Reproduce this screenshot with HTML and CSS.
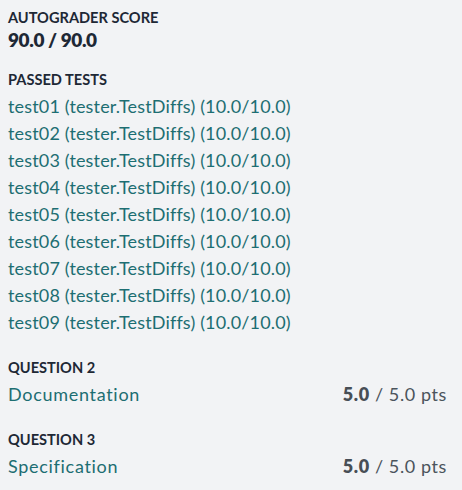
FILE: index.html
```html
<!DOCTYPE html>
<html>
<head>
<meta charset="utf-8">
<link rel="stylesheet" href="styles.css">
</head>
<body>
<div class="page">
  <section class="block summary">
    <div class="label">AUTOGRADER SCORE</div>
    <div class="score">90.0 / 90.0</div>
  </section>
  <section class="block">
    <div class="label">PASSED TESTS</div>
    <ul class="tests">
      <li>test01 (tester.TestDiffs) (10.0/10.0)</li>
      <li>test02 (tester.TestDiffs) (10.0/10.0)</li>
      <li>test03 (tester.TestDiffs) (10.0/10.0)</li>
      <li>test04 (tester.TestDiffs) (10.0/10.0)</li>
      <li>test05 (tester.TestDiffs) (10.0/10.0)</li>
      <li>test06 (tester.TestDiffs) (10.0/10.0)</li>
      <li>test07 (tester.TestDiffs) (10.0/10.0)</li>
      <li>test08 (tester.TestDiffs) (10.0/10.0)</li>
      <li>test09 (tester.TestDiffs) (10.0/10.0)</li>
    </ul>
  </section>
  <section class="block">
    <div class="label">QUESTION 2</div>
    <div class="question"><span class="qname">Documentation</span><span class="pts"><b>5.0</b> / 5.0 pts</span></div>
  </section>
  <section class="block">
    <div class="label">QUESTION 3</div>
    <div class="question"><span class="qname">Specification</span><span class="pts"><b>5.0</b> / 5.0 pts</span></div>
  </section>
</div>
</body>
</html>
```
FILE: styles.css
```css
html, body {
  margin: 0;
  padding: 0;
  background: #f2f3f5;
}
.page {
  padding: 8px 15px 0 8px;
  font-family: Lato, "Liberation Sans", sans-serif;
  color: #1e2835;
}
.block {
  margin-bottom: 22px;
}
.block.summary {
  margin-bottom: 18px;
}
.label {
  font-size: 14.6px;
  font-weight: 700;
  line-height: 20px;
  color: #1e2835;
}
.score {
  font-size: 19px;
  font-weight: 800;
  line-height: 24px;
  letter-spacing: -0.4px;
  color: #1e2835;
}
.tests {
  list-style: none;
  margin: 3px 0 0;
  padding: 0;
}
.tests li {
  font-size: 18px;
  line-height: 27px;
  letter-spacing: 0.16px;
  color: #1d6e72;
}
.question {
  margin-top: 3px;
  display: flex;
  justify-content: space-between;
  font-size: 18px;
  line-height: 27px;
}
.qname {
  color: #1d6e72;
  letter-spacing: 0.7px;
}
.pts {
  color: #4b545c;
  letter-spacing: 0.6px;
}
.pts b {
  font-weight: 800;
  color: #474e55;
}
```
